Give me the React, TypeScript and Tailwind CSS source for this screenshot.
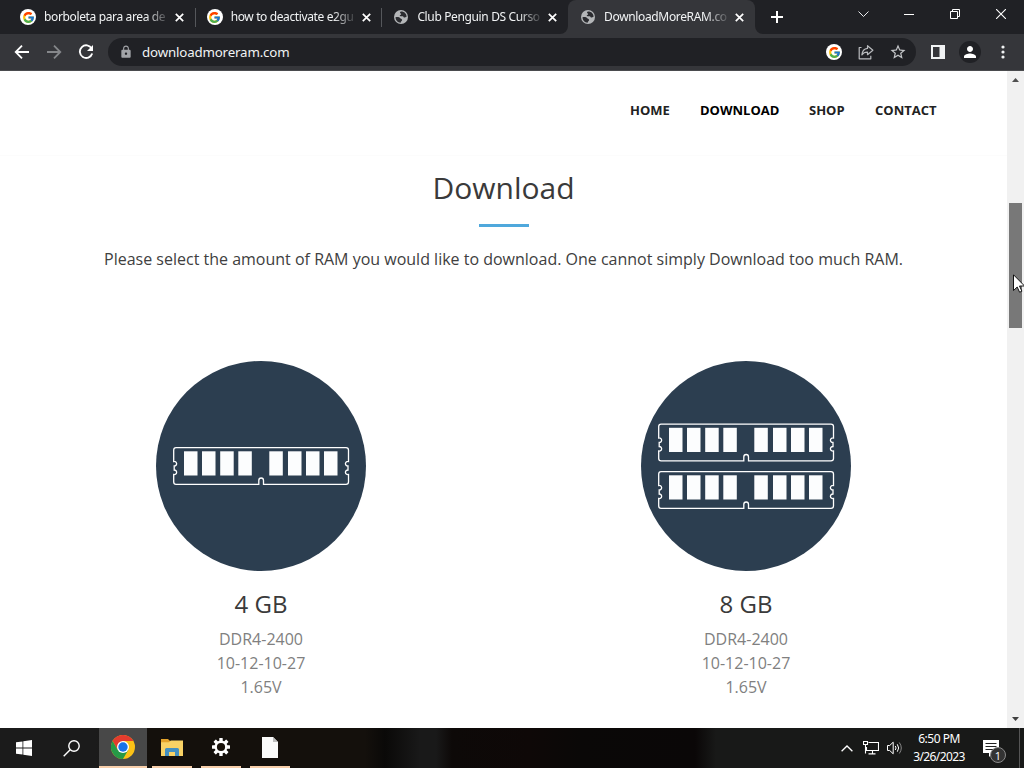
import * as React from "react";
import { FcGoogle } from "react-icons/fc";
import { MdLock, MdPerson, MdStarOutline } from "react-icons/md";

interface TabInfo {
  title: string;
  icon: "google" | "globe";
  textClass: string;
  active?: boolean;
}

const TABS: TabInfo[] = [
  { title: "borboleta para area de", icon: "google", textClass: "tracking-[-0.36px]" },
  { title: "how to deactivate e2gu", icon: "google", textClass: "tracking-[-0.38px]" },
  { title: "Club Penguin DS Curso", icon: "globe", textClass: "tracking-[-0.36px]" },
  { title: "DownloadMoreRAM.co", icon: "globe", textClass: "tracking-[-0.35px]", active: true },
];

const NAV = [
  { label: "HOME", width: "w-[40px]" },
  { label: "DOWNLOAD", width: "w-[79px]", active: true },
  { label: "SHOP", width: "w-[36px]" },
  { label: "CONTACT", width: "w-[62px]" },
];

const PRODUCTS = [
  { name: "4 GB", sticks: [86] },
  { name: "8 GB", sticks: [62.5, 110] },
];

const SPECS = ["DDR4-2400", "10-12-10-27", "1.65V"];

const CHIPS = [11, 29, 47.2, 65.3, 96.3, 115, 133, 151];

function GoogleBadge() {
  return (
    <span className="flex h-4 w-4 shrink-0 items-center justify-center rounded-full bg-white">
      <FcGoogle className="h-[13px] w-[13px]" />
    </span>
  );
}

function GlobeBadge() {
  return (
    <svg className="h-4 w-4 shrink-0" viewBox="0 0 16 16">
      <circle cx="8" cy="8" r="7" fill="#b4b6b8" />
      <path d="M2.500 8.300c1.500-.6 3.800-.5 4.500.7.600 1 1.800.7 2.100 1.700.300 1.300-1.200 1.300-1.500 3-2.900-.1-5.100-2.500-5.100-5.400z" fill="#2b2c30" />
      <path d="M8.300 2.500c-1.700.1-1.500 1.600-.6 1.900.900.300.300 1.400-.4 1.500-.900.200-.600 1.200.300 1.300h2.100c.9.100.8 1.300 1.700 1.400.9.100 1-.9 2.200-.9-.1-3-2.300-5.200-5.300-5.200z" fill="#2b2c30" />
    </svg>
  );
}

function CloseGlyph() {
  return (
    <svg className="h-[9px] w-[9px] shrink-0" viewBox="0 0 9 9" fill="none" stroke="#fff" strokeWidth="1.7">
      <path d="M.8.8l7.4 7.4M8.2.8L.8 8.2" />
    </svg>
  );
}

function Tab({ tab, divider }: { tab: TabInfo; divider: boolean }) {
  return (
    <div
      className={`relative flex h-full w-[186.7px] items-center pl-3 ${
        tab.active ? "rounded-t-lg bg-[#35363a]" : ""
      }`}
    >
      {divider ? <span className="absolute left-0 top-2 h-[19px] w-px bg-[#55575b]" /> : null}
      {tab.active ? (
        <>
          <svg className="absolute -left-2 bottom-0 h-2 w-2" viewBox="0 0 8 8">
            <path d="M8 0v8H0a8 8 0 0 0 8-8z" fill="#35363a" />
          </svg>
          <svg className="absolute -right-2 bottom-0 h-2 w-2" viewBox="0 0 8 8">
            <path d="M0 0v8h8a8 8 0 0 1-8-8z" fill="#35363a" />
          </svg>
        </>
      ) : null}
      {tab.icon === "google" ? <GoogleBadge /> : <GlobeBadge />}
      <span
        className={`ml-2 w-[127px] whitespace-nowrap text-[12px] leading-[18px] text-[#f1f3f4] [mask-image:linear-gradient(to_right,#000_80%,transparent)] ${tab.textClass}`}
      >
        {tab.title}
      </span>
      <span className="ml-1 flex">
        <CloseGlyph />
      </span>
    </div>
  );
}

function TabStrip() {
  return (
    <div className="flex h-[34px] bg-[#202125] pl-2">
      {TABS.map((tab, i) => (
        <Tab key={tab.title} tab={tab} divider={i === 1 || i === 2} />
      ))}
      <svg className="ml-4 mt-[11px] h-3 w-3" viewBox="0 0 12 12" stroke="#fff" strokeWidth="2">
        <path d="M6 0v12M0 6h12" />
      </svg>
      <div className="ml-auto flex h-7 items-center">
        <svg className="mr-[35px] h-[7px] w-[11px]" viewBox="0 0 11 7" fill="none" stroke="#e8eaed">
          <path d="M.5.5l5 5 5-5" />
        </svg>
        <svg className="mr-[36px] h-[10px] w-[10px]" viewBox="0 0 10 10" stroke="#fff">
          <path d="M0 5.5h10" />
        </svg>
        <svg className="mr-9 h-[10px] w-[10px]" viewBox="0 0 10 10" fill="none" stroke="#fff">
          <path d="M.5 2.5h7v7h-7zM2.5 2.5v-2h7v7h-2" />
        </svg>
        <svg className="mr-[18px] h-[10px] w-[10px]" viewBox="0 0 10 10" fill="none" stroke="#fff" strokeWidth="1.1">
          <path d="M0 0l10 10M10 0L0 10" />
        </svg>
      </div>
    </div>
  );
}

function AddressBar() {
  return (
    <div className="flex h-[37px] items-center border-b border-[#4a4b4e] bg-[#35363a]">
      <svg className="ml-[14px] h-4 w-4" viewBox="0 0 16 16" fill="none" stroke="#fff" strokeWidth="1.8">
        <path d="M15 8H2M8 1.7L1.7 8 8 14.3" />
      </svg>
      <svg className="ml-4 h-4 w-4" viewBox="0 0 16 16" fill="none" stroke="#85878a" strokeWidth="1.8">
        <path d="M1 8h13M8 1.7L14.3 8 8 14.3" />
      </svg>
      <svg className="ml-4 h-4 w-4" viewBox="0 0 16 16" fill="none" stroke="#fff" strokeWidth="1.9">
        <path d="M13.7 4.6A6.3 6.3 0 1 0 14.2 9.5" />
        <path d="M15 1v6H9z" fill="#fff" stroke="none" />
      </svg>
      <div className="ml-[14px] flex h-7 w-[808px] items-center rounded-full bg-[#202125] pl-[11px]">
        <MdLock className="h-[14px] w-[14px] text-[#a2a4a8]" />
        <span className="ml-[9px] whitespace-nowrap text-[13.3px] leading-5 tracking-[-0.16px] text-[#f1f3f4]">
          downloadmoreram.com
        </span>
        <span className="ml-auto flex items-center">
          <GoogleBadge />
          <svg
            className="ml-4 h-4 w-4"
            viewBox="0 0 16 16"
            fill="none"
            stroke="#b9bbbe"
            strokeWidth="1.2"
            strokeLinejoin="round"
          >
            <path d="M3.5 3.5H1.2v11.3h11.6v-3M9.5 1.700l5.400 4.500-5.400 4.500V8.200C7 8.100 5.200 9 3.900 10.900c.300-3.200 2.200-6.100 5.600-6.500z" />
          </svg>
          <MdStarOutline className="ml-[15px] mr-[9px] h-[18px] w-[18px] text-[#c4c6c9]" />
        </span>
      </div>
      <svg className="ml-[15px] h-[14px] w-[14px]" viewBox="0 0 14 14">
        <path d="M0 0h14v14H0z" fill="#f1f3f4" />
        <path d="M2 2h6.500v10H2z" fill="#35363a" />
      </svg>
      <span className="ml-[14px] flex h-[22px] w-[22px] items-center justify-center rounded-full bg-[#202125]">
        <MdPerson className="h-[18px] w-[18px] text-white" />
      </span>
      <svg className="ml-[19.5px] h-[14px] w-[4px]" viewBox="0 0 4 14" fill="#f1f3f4">
        <circle cx="2" cy="2" r="1.600" />
        <circle cx="2" cy="7" r="1.600" />
        <circle cx="2" cy="12" r="1.600" />
      </svg>
    </div>
  );
}

function RamStick({ y }: { y: number }) {
  return (
    <g transform={`translate(17 ${y})`}>
      <path
        d="M3 .7H173Q175.500 .7 175.500 3V14.500C171.500 14 171.500 19 175 19V23C171.500 23 171.500 28 175.500 27.500V35Q175.500 37.300 173 37.300H90.500V33.500Q90.500 31 88.200 31Q85.800 31 85.800 33.500V37.300H3Q.7 37.300 .7 35V27.500C4.500 28 4.500 23 1.200 23V19C4.500 19 4.500 14 .7 14.500V3Q.7 .7 3 .7Z"
        fill="none"
        stroke="#fff"
        strokeWidth="1.3"
      />
      {CHIPS.map((x) => (
        <rect key={x} x={x} y="4.300" width="13.500" height="24.200" fill="#fcfdfe" />
      ))}
    </g>
  );
}

function ProductCard({ name, sticks }: { name: string; sticks: number[] }) {
  return (
    <li className="flex w-[485px] flex-col items-center">
      <svg className="h-[210px] w-[210px]" viewBox="0 0 210 210">
        <circle cx="105" cy="105" r="105" fill="#2c3e50" />
        {sticks.map((y) => (
          <RamStick key={y} y={y} />
        ))}
      </svg>
      <h3 className="mt-4 text-[24px] leading-[34px] text-[#3a3a3a]">{name}</h3>
      <div className="mt-1.5 text-center text-[16px] leading-6 text-[#808080]">
        {SPECS.map((spec) => (
          <p key={spec}>{spec}</p>
        ))}
      </div>
    </li>
  );
}

function Page() {
  return (
    <main className="h-full w-[1007px] bg-white">
      <nav className="flex h-[85px] items-center justify-end gap-[30px] border-b border-[#fcfcfc] pb-1.5 pr-[70px]">
        {NAV.map((item) => (
          <a
            key={item.label}
            className={`whitespace-nowrap text-[13px] font-bold leading-5 ${item.width} ${
              item.active ? "text-black" : "text-[#222]"
            }`}
          >
            {item.label}
          </a>
        ))}
      </nav>
      <section className="flex flex-col items-center">
        <h2 className="mt-[11px] text-[30px] leading-[42px] text-[#3a3a3a]">Download</h2>
        <span className="mt-[15px] h-[3px] w-[50px] bg-[#4fa8dc]" />
        <p className="mt-5 whitespace-nowrap text-[16px] leading-6 text-[#404040]">
          Please select the amount of RAM you would like to download. One cannot simply Download too much RAM.
        </p>
        <ul className="mt-[90px] flex">
          {PRODUCTS.map((p) => (
            <ProductCard key={p.name} name={p.name} sticks={p.sticks} />
          ))}
        </ul>
      </section>
    </main>
  );
}

function Scrollbar() {
  return (
    <div className="relative flex w-[17px] flex-col items-center bg-[#f1f1f1]">
      <svg className="mt-[7px] h-1 w-[7px]" viewBox="0 0 7 4">
        <path d="M0 4L3.500 0 7 4z" fill="#505050" />
      </svg>
      <div className="mt-[121px] h-[125px] w-[13px] bg-[#787878]" />
      <svg className="mb-[7px] mt-auto h-1 w-[7px]" viewBox="0 0 7 4">
        <path d="M0 0l3.500 4L7 0z" fill="#404040" />
      </svg>
      {/* pointer resting on the thumb */}
      <svg className="absolute left-[6px] top-[203px] h-[19px] w-[12px]" viewBox="0 0 12 19">
        <path d="M.5.800v15.700l3.700-3.500 2.400 5.200 2.300-1-2.400-5.200h5.100z" fill="#fff" stroke="#000" strokeWidth=".9" />
      </svg>
    </div>
  );
}

function ChromeLogo() {
  return (
    <svg className="h-6 w-6" viewBox="0 0 24 24">
      <circle cx="12" cy="12" r="12" fill="#fbc116" />
      <path d="M1.600 6A12 12 0 0 1 22.400 6H12L6.800 15z" fill="#e33b2e" />
      <path d="M1.600 6A12 12 0 0 0 12 24l5.200-9H6.800z" fill="#269947" />
      <circle cx="12" cy="12" r="6" fill="#fff" />
      <circle cx="12" cy="12" r="4.700" fill="#1a73e8" />
    </svg>
  );
}

function FolderIcon() {
  return (
    <svg className="h-[19px] w-[22px]" viewBox="0 0 22 19">
      <path d="M0 1h7l2 2h12.500v15H0z" fill="#e3a32b" />
      <path d="M0 4.200h8l1.800-1.700H22V18H0z" fill="#f8d265" />
      <path d="M4 18v-6.500q0-1.500 1.500-1.500h11q1.500 0 1.500 1.500V18h-4v-4H8v4z" fill="#4490c0" />
    </svg>
  );
}

function GearIcon() {
  return (
    <svg className="h-[18px] w-[18px]" viewBox="0 0 18 18">
      <g fill="#fff">
        {[0, 45, 90, 135].map((deg) => (
          <rect key={deg} x="7.300" y="0" width="3.400" height="18" rx=".5" transform={`rotate(${deg} 9 9)`} />
        ))}
        <circle cx="9" cy="9" r="6.500" />
      </g>
      <circle cx="9" cy="9" r="4.100" fill="#17110a" />
    </svg>
  );
}

function FileIcon() {
  return (
    <svg className="h-[21px] w-4" viewBox="0 0 16 21">
      <path d="M0 0h11l5 5v16H0z" fill="#fafafa" />
      <path d="M11 0v5h5z" fill="#bdbdbd" />
    </svg>
  );
}

function TaskButton({ children, className }: { children: React.ReactNode; className: string }) {
  return <div className={`flex h-10 items-center justify-center border-b-2 border-[#f7ceaa] ${className}`}>{children}</div>;
}

function Taskbar() {
  return (
    <footer className="flex h-10 bg-[linear-gradient(to_right,#1b1b1b_0,#1b1b1b_96px,#14100c_150px,#14100c_365px,#0a0908_385px,#191919_420px,#191919_436px,#0d0908_452px,#0e0807_530px,#0a0807_580px,#0a0707_695px,#181918_716px,#181918_100%)]">
      <div className="flex w-[49px] items-center pl-4">
        <svg className="h-4 w-4" viewBox="0 0 16 16" fill="#fff">
          <path d="M0 2.300l6.500-.9v6.200H0zM7.300 1.300L16 0v7.600H7.300zM0 8.400h6.500v6.200L0 13.700zM7.300 8.400H16V16l-8.700-1.300z" />
        </svg>
      </div>
      <div className="flex w-[50px] items-center pl-[14px]">
        <svg className="h-[17px] w-[17px]" viewBox="0 0 17 17" fill="none" stroke="#fff" strokeWidth="1.400">
          <circle cx="11" cy="6" r="5.200" />
          <path d="M7.200 9.800L.7 16.300" />
        </svg>
      </div>
      <TaskButton className="w-12 bg-[#484848]">
        <ChromeLogo />
      </TaskButton>
      <TaskButton className="ml-[5px] w-10">
        <FolderIcon />
      </TaskButton>
      <TaskButton className="ml-[9px] w-10">
        <GearIcon />
      </TaskButton>
      <TaskButton className="ml-[9px] w-10">
        <FileIcon />
      </TaskButton>
      <div className="ml-auto flex items-center text-white">
        <svg className="h-[7px] w-3" viewBox="0 0 12 7" fill="none" stroke="#fff" strokeWidth="1.300">
          <path d="M.6 6.300L6 1l5.400 5.300" />
        </svg>
        <svg className="ml-[10px] h-[14px] w-4" viewBox="0 0 16 14" fill="none" stroke="#fff" strokeWidth="1.100">
          <path d="M5.500 1.500h10v8h-12V6M.5.500h4v3h-4zM2.500 3.500v9M9.500 9.500v3M5.500 12.900h7" />
        </svg>
        <svg className="ml-2 h-[14px] w-[15px]" viewBox="0 0 15 14" fill="none" stroke="#fff">
          <path d="M.5 4.500h2.200L6.200 1.200v11.600L2.700 9.500H.5zM8.300 5q1.500 2 0 4M10.300 3.300q2.700 3.700 0 7.400" />
          <path d="M12.300 1.500q4 5.500 0 11" stroke="#888" />
        </svg>
        <div className="ml-2 w-[58px] whitespace-nowrap text-center font-['Noto_Sans'] text-[12px] leading-[18px]">
          <p className="tracking-[-0.5px]">6:50 PM</p>
          <p className="tracking-[-0.6px]">3/26/2023</p>
        </div>
        <div className="relative ml-[15px] mr-[20px] h-5 w-4">
          <svg className="h-5 w-4" viewBox="0 0 16 20">
            <path d="M0 2h16v13h-6l-4 4v-4H0z" fill="#fff" />
            <path d="M2.500 5.500h11M2.500 8.500h11M2.500 11.500h8" stroke="#222" />
          </svg>
          <span className="absolute left-[7px] top-[9px] flex h-4 w-4 items-center justify-center rounded-full border border-[#8a8a8a] bg-[#333] text-[11px] leading-none">
            1
          </span>
        </div>
      </div>
      <span className="mr-[4px] w-px bg-[#555]" />
    </footer>
  );
}

export default function App() {
  return (
    <div className="flex h-[768px] w-[1024px] flex-col overflow-hidden font-['Open_Sans',sans-serif]">
      <header className="font-['Noto_Sans',sans-serif]">
        <TabStrip />
        <AddressBar />
      </header>
      <div className="flex min-h-0 flex-1">
        <Page />
        <Scrollbar />
      </div>
      <Taskbar />
    </div>
  );
}
